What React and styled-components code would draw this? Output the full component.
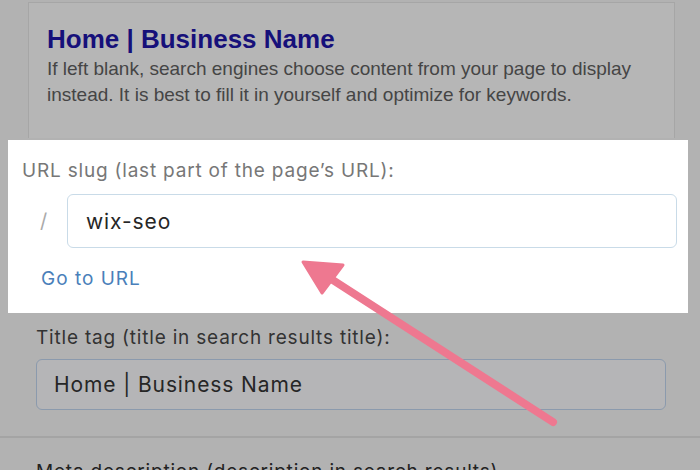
import React from "react";
import styled, { createGlobalStyle } from "styled-components";

const Global = createGlobalStyle`
  html, body { margin: 0; padding: 0; background: #b2b2b2; }
  #root { width: 700px; height: 470px; }
`;

const Page = styled.div`
  position: relative;
  width: 700px;
  height: 470px;
  overflow: hidden;
  background: #b2b2b2;
  display: flex;
  flex-direction: column;
`;

const TopCard = styled.section`
  margin: 2px 25px 0 28px;
  height: 136px;
  flex: none;
  box-sizing: border-box;
  background: #b6b6b6;
  border: 1px solid #a6a6a6;
  border-bottom: none;
  padding: 19px 18px 0 18px;
  font-family: "Liberation Sans", Arial, sans-serif;
`;

const PreviewTitle = styled.div`
  color: #16107a;
  font-weight: bold;
  font-size: 26px;
  line-height: 34px;
`;

const PreviewDesc = styled.div`
  color: #454545;
  font-size: 19px;
  line-height: 26px;
  white-space: nowrap;
`;

const Highlight = styled.section`
  margin: 2px 12px 0 8px;
  height: 173px;
  flex: none;
  box-sizing: border-box;
  background: #ffffff;
  padding: 20px 11px 0 14px;
  display: flex;
  flex-direction: column;
  font-family: Inter, "Liberation Sans", sans-serif;
`;

const Label = styled.div`
  font-family: Inter, "Liberation Sans", sans-serif;
  font-size: 19px;
  letter-spacing: 0.8px;
  line-height: 22px;
  white-space: nowrap;
  color: ${(p) => p.$color || "#777"};
`;

const SlugRow = styled.div`
  display: flex;
  align-items: center;
  margin-top: 12px;
`;

const Slash = styled.span`
  width: 45px;
  padding-left: 18px;
  box-sizing: border-box;
  font-size: 20px;
  color: #aaa;
`;

const Field = styled.div`
  flex: ${(p) => (p.$grow ? "1" : "none")};
  height: ${(p) => p.$h}px;
  box-sizing: border-box;
  border: 1px solid ${(p) => p.$border};
  border-radius: 6px;
  background: ${(p) => p.$bg};
  display: flex;
  align-items: center;
  padding-left: ${(p) => p.$pad}px;
  font-family: Inter, "Liberation Sans", sans-serif;
  font-size: 21px;
  letter-spacing: 0.9px;
  color: #262626;
  white-space: nowrap;
`;

const GoLink = styled.a`
  margin-top: 19px;
  margin-left: 19px;
  font-size: 19px;
  letter-spacing: 1px;
  color: #4a7fba;
  text-decoration: none;
`;

const Lower = styled.section`
  flex: none;
  padding: 14px 34px 0 36px;
  display: flex;
  flex-direction: column;
  gap: 10px;
`;

const Divider = styled.hr`
  flex: none;
  margin: 26px 0 0 0;
  border: none;
  border-top: 2px solid #a4a4a4;
`;

const MetaLabel = styled.div`
  flex: none;
  font-family: Inter, "Liberation Sans", sans-serif;
  font-size: 19px;
  letter-spacing: 0.8px;
  color: #222;
  padding: 22px 0 0 36px;
  white-space: nowrap;
`;

const ArrowSvg = styled.svg`
  position: absolute;
  left: 0;
  top: 0;
  pointer-events: none;
`;

export default function App() {
  return (
    <>
      <Global />
      <Page>
        <TopCard>
          <PreviewTitle>Home | Business Name</PreviewTitle>
          <PreviewDesc>
            If left blank, search engines choose content from your page to display
            <br />
            instead. It is best to fill it in yourself and optimize for keywords.
          </PreviewDesc>
        </TopCard>
        <Highlight>
          <Label>URL slug (last part of the page’s URL):</Label>
          <SlugRow>
            <Slash>/</Slash>
            <Field $grow $h={54} $border="#c9dbe8" $bg="#fff" $pad={18}>wix-seo</Field>
          </SlugRow>
          <GoLink href="#">Go to URL</GoLink>
        </Highlight>
        <Lower>
          <Label $color="#333">Title tag (title in search results title):</Label>
          <Field $h={51} $border="#8b9aad" $bg="#b5b5b7" $pad={17}>Home | Business Name</Field>
        </Lower>
        <Divider />
        <MetaLabel>Meta description (description in search results)</MetaLabel>
        <ArrowSvg width="700" height="470" viewBox="0 0 700 470">
          <line x1="553" y1="422" x2="325" y2="275" stroke="#ee7890" strokeWidth="8" strokeLinecap="round" />
          <polygon points="303,262 343,265 322,293" fill="#ee7890" stroke="#ee7890" strokeWidth="3" strokeLinejoin="round" />
        </ArrowSvg>
      </Page>
    </>
  );
}
